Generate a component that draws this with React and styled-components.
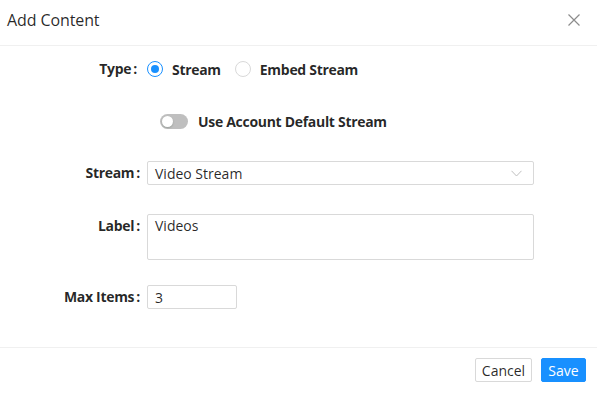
import React from "react";
import styled, { createGlobalStyle } from "styled-components";

const Global = createGlobalStyle`
  html, body { margin: 0; padding: 0; background: #fff; }
  body { font-family: "Open Sans", "Noto Sans", sans-serif; font-size: 14px; color: rgba(0,0,0,0.85); }
  * { box-sizing: border-box; }
`;

const Modal = styled.div`
  width: 597px;
  height: 397px;
  display: flex;
  flex-direction: column;
  background: #fff;
`;

const Header = styled.div`
  height: 46px;
  border-bottom: 1px solid #f0f0f0;
  display: flex;
  align-items: center;
  justify-content: space-between;
  padding: 0 16px 0 7px;
`;

const Title = styled.div`
  font-size: 16px;
  font-weight: 500;
  color: rgba(0,0,0,0.85);
  letter-spacing: -0.1px;
  margin-top: -6px;
`;

const Close = styled.button`
  border: 0;
  background: none;
  padding: 0;
  width: 14px;
  height: 14px;
  display: flex;
  margin-top: -6px;
`;

const Body = styled.div`
  flex: 1;
  padding: 11px 0 0 0;
  display: flex;
  flex-direction: column;
`;

const Row = styled.div`
  display: grid;
  grid-template-columns: 140px 1fr;
  column-gap: 7px;
  align-items: ${p => p.$top ? "start" : "center"};
  margin-top: ${p => p.$mt || 0}px;
  min-height: 24px;
`;

const Label = styled.label`
  text-align: right;
  font-weight: 700;
  font-size: 14px;
  color: rgba(0,0,0,0.85);
  line-height: 24px;
  letter-spacing: -0.3px;
  padding-right: ${p => p.$pr || 0}px;
`;

const Colon = styled.span`
  margin-left: 2px;
`;

const Controls = styled.div`
  display: flex;
  align-items: center;
  width: 387px;
`;

const RadioItem = styled.span`
  display: inline-flex;
  align-items: center;
  gap: 9px;
  font-weight: 700;
  font-size: 14px;
  letter-spacing: -0.3px;
  margin-right: ${p => p.$mr || 0}px;
`;

const RadioCircle = styled.span`
  width: 16px;
  height: 16px;
  border-radius: 50%;
  border: 1px solid ${p => p.$checked ? "#1890ff" : "#d9d9d9"};
  display: inline-flex;
  align-items: center;
  justify-content: center;
  &::after {
    content: "";
    width: 8px;
    height: 8px;
    border-radius: 50%;
    background: #1890ff;
    display: ${p => p.$checked ? "block" : "none"};
  }
`;

const ToggleRow = styled.div`
  display: flex;
  align-items: center;
  gap: 10px;
  height: 24px;
  margin-top: 28px;
  padding-left: 160px;
  font-weight: 700;
  font-size: 14px;
  letter-spacing: -0.3px;
`;

const Switch = styled.span`
  width: 28px;
  height: 15px;
  border-radius: 8px;
  background: rgba(0,0,0,0.25);
  position: relative;
  &::after {
    content: "";
    position: absolute;
    left: 2px;
    top: 2px;
    width: 11px;
    height: 11px;
    border-radius: 50%;
    background: #fff;
    box-shadow: 0 1px 2px rgba(0,35,11,0.2);
  }
`;

const Select = styled.div`
  width: 387px;
  height: 24px;
  border: 1px solid #d9d9d9;
  border-radius: 2px;
  display: flex;
  align-items: center;
  justify-content: space-between;
  padding: 0 11px 0 7px;
  font-size: 14px;
`;

const TextArea = styled.div`
  width: 387px;
  height: 46px;
  border: 1px solid #d9d9d9;
  border-radius: 2px;
  padding: 1px 7px;
  font-size: 14px;
  line-height: 20px;
`;

const NumberInput = styled.div`
  width: 90px;
  height: 24px;
  border: 1px solid #d9d9d9;
  border-radius: 2px;
  padding: 0 7px;
  display: flex;
  align-items: center;
  font-size: 14px;
`;

const Footer = styled.div`
  height: 50px;
  border-top: 1px solid #f0f0f0;
  display: flex;
  justify-content: flex-end;
  align-items: flex-start;
  gap: 9px;
  padding: 10px 11px 0 0;
`;

const Button = styled.button`
  height: 24px;
  padding: 0;
  font-family: inherit;
  font-size: 14px;
  border-radius: 2px;
  border: 1px solid ${p => p.$primary ? "#1890ff" : "#d9d9d9"};
  background: ${p => p.$primary ? "#1890ff" : "#fff"};
  color: ${p => p.$primary ? "#fff" : "rgba(0,0,0,0.85)"};
  width: ${p => p.$w}px;
`;

export default function App() {
  return (
    <>
      <Global />
      <Modal>
        <Header>
          <Title>Add Content</Title>
          <Close aria-label="Close">
            <svg width="14" height="14" viewBox="0 0 14 14">
              <path d="M1.5 1.5 L12.5 12.5 M12.5 1.5 L1.5 12.5" stroke="#8c8c8c" strokeWidth="1.2" fill="none" />
            </svg>
          </Close>
        </Header>
        <Body>
          <Row>
            <Label $pr={3}>Type<Colon>:</Colon></Label>
            <Controls>
              <RadioItem $mr={14}><RadioCircle $checked />Stream</RadioItem>
              <RadioItem><RadioCircle />Embed Stream</RadioItem>
            </Controls>
          </Row>
          <ToggleRow>
            <Switch />
            Use Account Default Stream
          </ToggleRow>
          <Row $mt={28}>
            <Label>Stream<Colon>:</Colon></Label>
            <Select>
              <span>Video Stream</span>
              <svg width="11" height="7" viewBox="0 0 11 7">
                <path d="M0.5 0.8 L5.5 6 L10.5 0.8" stroke="#bfbfbf" strokeWidth="1" fill="none" />
              </svg>
            </Select>
          </Row>
          <Row $mt={29} $top>
            <Label>Label<Colon>:</Colon></Label>
            <TextArea>Videos</TextArea>
          </Row>
          <Row $mt={25}>
            <Label>Max Items<Colon>:</Colon></Label>
            <NumberInput>3</NumberInput>
          </Row>
        </Body>
        <Footer>
          <Button $w={57}>Cancel</Button>
          <Button $primary $w={45}>Save</Button>
        </Footer>
      </Modal>
    </>
  );
}
